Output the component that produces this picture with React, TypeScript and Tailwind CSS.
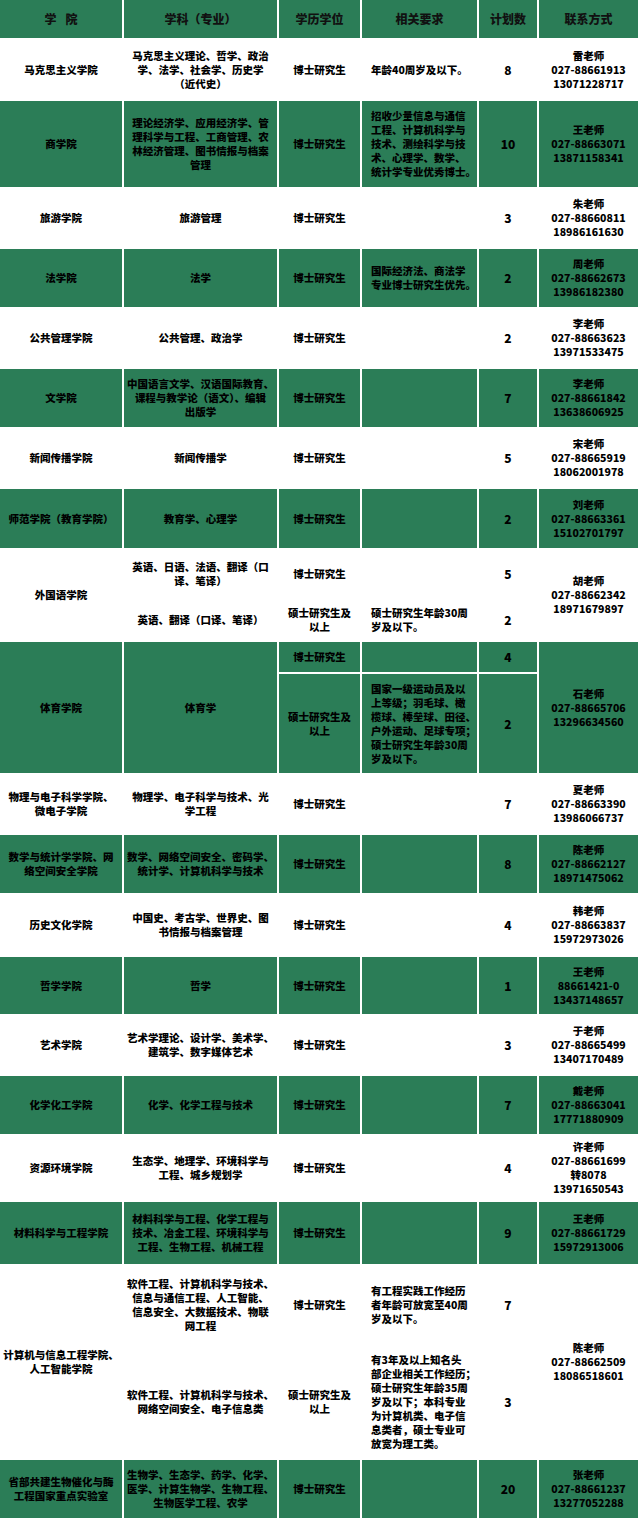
import type { ReactNode } from 'react';

// 列宽：学院 / 学科 / 学历 / 要求 / 计划数 / 联系方式
const W = {
  school: 'w-[122px]',
  subject: 'w-[153px]',
  degree: 'w-[81px]',
  req: 'w-[115px]',
  count: 'w-[58px]',
  contact: 'w-[99px]',
};

type Sub = {
  h?: string;
  subject?: string[];
  degree: string[];
  req?: string[];
  count: string;
};

type Row = {
  h: string;
  green?: boolean;
  school: string[];
  subject?: string[]; // 跨子行的学科
  subs: Sub[];
  contact: string[];
};

const PHD = ['博士研究生'];
const MASTER = ['硕士研究生及', '以上'];

const ROWS: Row[] = [
  {
    h: 'h-[59px]',
    school: ['马克思主义学院'],
    subs: [{ subject: ['马克思主义理论、哲学、政治', '学、法学、社会学、历史学', '（近代史）'], degree: PHD, req: ['年龄40周岁及以下。'], count: '8' }],
    contact: ['雷老师', '027-88661913', '13071228717'],
  },
  {
    h: 'h-[86px]',
    green: true,
    school: ['商学院'],
    subs: [
      {
        subject: ['理论经济学、应用经济学、管', '理科学与工程、工商管理、农', '林经济管理、图书情报与档案', '管理'],
        degree: PHD,
        req: ['招收少量信息与通信', '工程、计算机科学与', '技术、测绘科学与技', '术、心理学、数学、', '统计学专业优秀博士。'],
        count: '10',
      },
    ],
    contact: ['王老师', '027-88663071', '13871158341'],
  },
  {
    h: 'h-[58px]',
    school: ['旅游学院'],
    subs: [{ subject: ['旅游管理'], degree: PHD, count: '3' }],
    contact: ['朱老师', '027-88660811', '18986161630'],
  },
  {
    h: 'h-[58px]',
    green: true,
    school: ['法学院'],
    subs: [{ subject: ['法学'], degree: PHD, req: ['国际经济法、商法学', '专业博士研究生优先。'], count: '2' }],
    contact: ['周老师', '027-88662673', '13986182380'],
  },
  {
    h: 'h-[58px]',
    school: ['公共管理学院'],
    subs: [{ subject: ['公共管理、政治学'], degree: PHD, count: '2' }],
    contact: ['李老师', '027-88663623', '13971533475'],
  },
  {
    h: 'h-[58px]',
    green: true,
    school: ['文学院'],
    subs: [{ subject: ['中国语言文学、汉语国际教育、', '课程与教学论（语文）、编辑', '出版学'], degree: PHD, count: '7' }],
    contact: ['李老师', '027-88661842', '13638606925'],
  },
  {
    h: 'h-[58px]',
    school: ['新闻传播学院'],
    subs: [{ subject: ['新闻传播学'], degree: PHD, count: '5' }],
    contact: ['宋老师', '027-88665919', '18062001978'],
  },
  {
    h: 'h-[59px]',
    green: true,
    school: ['师范学院（教育学院）'],
    subs: [{ subject: ['教育学、心理学'], degree: PHD, count: '2' }],
    contact: ['刘老师', '027-88663361', '15102701797'],
  },
  {
    h: 'h-[90px]',
    school: ['外国语学院'],
    subs: [
      { h: 'h-[47px]', subject: ['英语、日语、法语、翻译（口', '译、笔译）'], degree: PHD, count: '5' },
      { h: 'h-[41px]', subject: ['英语、翻译（口译、笔译）'], degree: MASTER, req: ['硕士研究生年龄30周', '岁及以下。'], count: '2' },
    ],
    contact: ['胡老师', '027-88662342', '18971679897'],
  },
  {
    h: 'h-[131px]',
    green: true,
    school: ['体育学院'],
    subject: ['体育学'],
    subs: [
      { h: 'h-[30px]', degree: PHD, count: '4' },
      {
        h: 'h-[99px]',
        degree: MASTER,
        req: ['国家一级运动员及以', '上等级；羽毛球、橄', '榄球、棒垒球、田径、', '户外运动、足球专项；', '硕士研究生年龄30周', '岁及以下。'],
        count: '2',
      },
    ],
    contact: ['石老师', '027-88665706', '13296634560'],
  },
  {
    h: 'h-[58px]',
    school: ['物理与电子科学学院、', '微电子学院'],
    subs: [{ subject: ['物理学、电子科学与技术、光', '学工程'], degree: PHD, count: '7' }],
    contact: ['夏老师', '027-88663390', '13986066737'],
  },
  {
    h: 'h-[58px]',
    green: true,
    school: ['数学与统计学学院、网', '络空间安全学院'],
    subs: [{ subject: ['数学、网络空间安全、密码学、', '统计学、计算机科学与技术'], degree: PHD, count: '8' }],
    contact: ['陈老师', '027-88662127', '18971475062'],
  },
  {
    h: 'h-[60px]',
    school: ['历史文化学院'],
    subs: [{ subject: ['中国史、考古学、世界史、图', '书情报与档案管理'], degree: PHD, count: '4' }],
    contact: ['韩老师', '027-88663837', '15972973026'],
  },
  {
    h: 'h-[57px]',
    green: true,
    school: ['哲学学院'],
    subs: [{ subject: ['哲学'], degree: PHD, count: '1' }],
    contact: ['王老师', '88661421-0', '13437148657'],
  },
  {
    h: 'h-[58px]',
    school: ['艺术学院'],
    subs: [{ subject: ['艺术学理论、设计学、美术学、', '建筑学、数字媒体艺术'], degree: PHD, count: '3' }],
    contact: ['于老师', '027-88665499', '13407170489'],
  },
  {
    h: 'h-[58px]',
    green: true,
    school: ['化学化工学院'],
    subs: [{ subject: ['化学、化学工程与技术'], degree: PHD, count: '7' }],
    contact: ['戴老师', '027-88663041', '17771880909'],
  },
  {
    h: 'h-[64px]',
    school: ['资源环境学院'],
    subs: [{ subject: ['生态学、地理学、环境科学与', '工程、城乡规划学'], degree: PHD, count: '4' }],
    contact: ['许老师', '027-88661699', '转8078', '13971650543'],
  },
  {
    h: 'h-[62px]',
    green: true,
    school: ['材料科学与工程学院'],
    subs: [{ subject: ['材料科学与工程、化学工程与', '技术、冶金工程、环境科学与', '工程、生物工程、机械工程'], degree: PHD, count: '9' }],
    contact: ['王老师', '027-88661729', '15972913006'],
  },
  {
    h: 'h-[192px]',
    school: ['计算机与信息工程学院、', '人工智能学院'],
    subs: [
      {
        h: 'h-[78px]',
        subject: ['软件工程、计算机科学与技术、', '信息与通信工程、人工智能、', '信息安全、大数据技术、物联', '网工程'],
        degree: PHD,
        req: ['有工程实践工作经历', '者年龄可放宽至40周', '岁及以下。'],
        count: '7',
      },
      {
        h: 'h-[112px]',
        subject: ['软件工程、计算机科学与技术、', '网络空间安全、电子信息类'],
        degree: MASTER,
        req: ['有3年及以上知名头', '部企业相关工作经历；', '硕士研究生年龄35周', '岁及以下；本科专业', '为计算机类、电子信', '息类者，硕士专业可', '放宽为理工类。'],
        count: '3',
      },
    ],
    contact: ['陈老师', '027-88662509', '18086518601'],
  },
  {
    h: 'h-[58px]',
    green: true,
    school: ['省部共建生物催化与酶', '工程国家重点实验室'],
    subs: [{ subject: ['生物学、生态学、药学、化学、', '医学、计算生物学、生物工程、', '生物医学工程、农学'], degree: PHD, count: '20' }],
    contact: ['张老师', '027-88661237', '13277052288'],
  },
];

function Cell({
  width,
  green,
  left,
  children,
}: {
  width: string;
  green?: boolean;
  left?: boolean;
  children?: ReactNode;
}) {
  return (
    <div
      className={`${width} shrink-0 h-full flex flex-col justify-center ${
        left ? 'items-start text-left pl-[9px]' : 'items-center text-center'
      } ${green ? 'bg-[#2b7d57]' : 'bg-white'}`}
    >
      {children}
    </div>
  );
}

function Lines({ lines }: { lines?: string[] }) {
  if (!lines) return null;
  return (
    <>
      {lines.map((l, i) => (
        <span key={i} className="whitespace-nowrap">
          {l}
        </span>
      ))}
    </>
  );
}

function TableRow({ row }: { row: Row }) {
  const g = row.green;
  return (
    <div className={`flex gap-[2px] ${row.h}`}>
      <Cell width={W.school} green={g}>
        <Lines lines={row.school} />
      </Cell>
      {row.subject && (
        <Cell width={W.subject} green={g}>
          <Lines lines={row.subject} />
        </Cell>
      )}
      <div className="flex flex-col gap-[2px] h-full">
        {row.subs.map((s, i) => (
          <div key={i} className={`flex gap-[2px] ${s.h ?? 'h-full'}`}>
            {!row.subject && (
              <Cell width={W.subject} green={g}>
                <Lines lines={s.subject} />
              </Cell>
            )}
            <Cell width={W.degree} green={g}>
              <Lines lines={s.degree} />
            </Cell>
            <Cell width={W.req} green={g} left>
              <Lines lines={s.req} />
            </Cell>
            <Cell width={W.count} green={g}>
              <span className="text-[12px]">{s.count}</span>
            </Cell>
          </div>
        ))}
      </div>
      <Cell width={W.contact} green={g}>
        <Lines lines={row.contact} />
      </Cell>
    </div>
  );
}

const HEADERS: [string, ReactNode][] = [
  [W.school, <span className="flex gap-[9px]"><span>学</span><span>院</span></span>],
  [W.subject, '学科（专业）'],
  [W.degree, '学历学位'],
  [W.req, '相关要求'],
  [W.count, '计划数'],
  [W.contact, '联系方式'],
];

export default function App() {
  return (
    <div
      className="w-[640px] h-[1520px] bg-white text-black font-black text-[10.5px] leading-[14px]"
      style={{ fontFamily: '"Noto Sans CJK SC", "Noto Sans", sans-serif' }}
    >
      <div className="flex flex-col gap-[2px]">
        {/* 表头 */}
        <div className="flex gap-[2px] h-[38px]">
          {HEADERS.map(([w, label], i) => (
            <div key={i} className={`${w} shrink-0 flex items-center justify-center bg-[#2b7d57] text-[12px] text-[#111]`}>
              {label}
            </div>
          ))}
        </div>
        {ROWS.map((row, i) => (
          <TableRow key={i} row={row} />
        ))}
      </div>
    </div>
  );
}
